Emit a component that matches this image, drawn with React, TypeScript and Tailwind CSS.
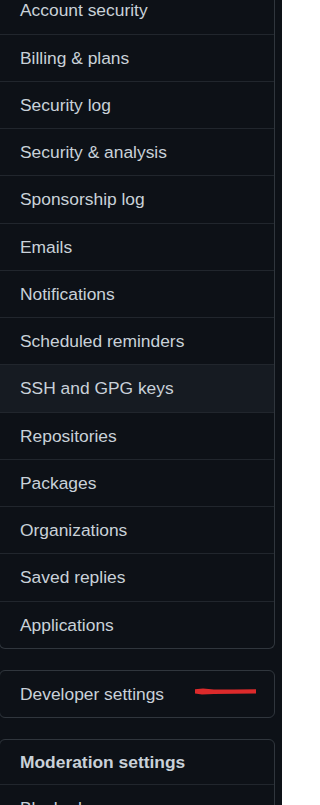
const items = [
  'Account security',
  'Billing & plans',
  'Security log',
  'Security & analysis',
  'Sponsorship log',
  'Emails',
  'Notifications',
  'Scheduled reminders',
  'SSH and GPG keys',
  'Repositories',
  'Packages',
  'Organizations',
  'Saved replies',
  'Applications',
]

export default function App() {
  return (
    <div
      className="h-[805px] w-[282px] overflow-hidden bg-[#0d1117] text-[17.4px] text-[#c9d1d9]"
      style={{ fontFamily: '"Liberation Sans", Arial, sans-serif' }}
    >
      <div className="-mt-[13px] -ml-px w-[276px]">
        {/* Main settings list */}
        <ul className="m-0 list-none rounded-b-md border-x border-b border-[#30363d] p-0">
          {items.map((label, i) => (
            <li
              key={label}
              className={
                (i === 0 ? 'h-[46.5px] ' : 'h-[47.25px] border-t border-[#21262d] ') +
                (label === 'SSH and GPG keys' ? 'bg-[#161b22] ' : '') +
                'flex items-center pl-[20px]'
              }
            >
              {label}
            </li>
          ))}
        </ul>

        {/* Developer settings */}
        <div className="relative mt-[21px] flex h-[48px] items-center rounded-md border border-[#30363d] pl-[20px]">
          <span>Developer settings</span>
          <svg className="absolute left-[194px] top-[17px]" width="63" height="8" viewBox="0 0 63 8">
            <path
              d="M1 1.2 L9 0.6 L20 1.6 L40 1.5 L62 1.3 L62 5.6 L40 5.7 L20 6.1 L8 6.5 L1 5.6 Z"
              fill="#dc2a2b"
            />
          </svg>
        </div>

        {/* Moderation settings */}
        <div className="mt-[21px] rounded-md border border-[#30363d]">
          <div className="flex h-[44px] items-center pl-[20px] font-bold">Moderation settings</div>
          <div className="flex h-[47px] items-center border-t border-[#21262d] pl-[20px]">Blocked users</div>
          <div className="flex h-[47px] items-center border-t border-[#21262d] pl-[20px]">Interaction limits</div>
        </div>
      </div>
    </div>
  )
}
